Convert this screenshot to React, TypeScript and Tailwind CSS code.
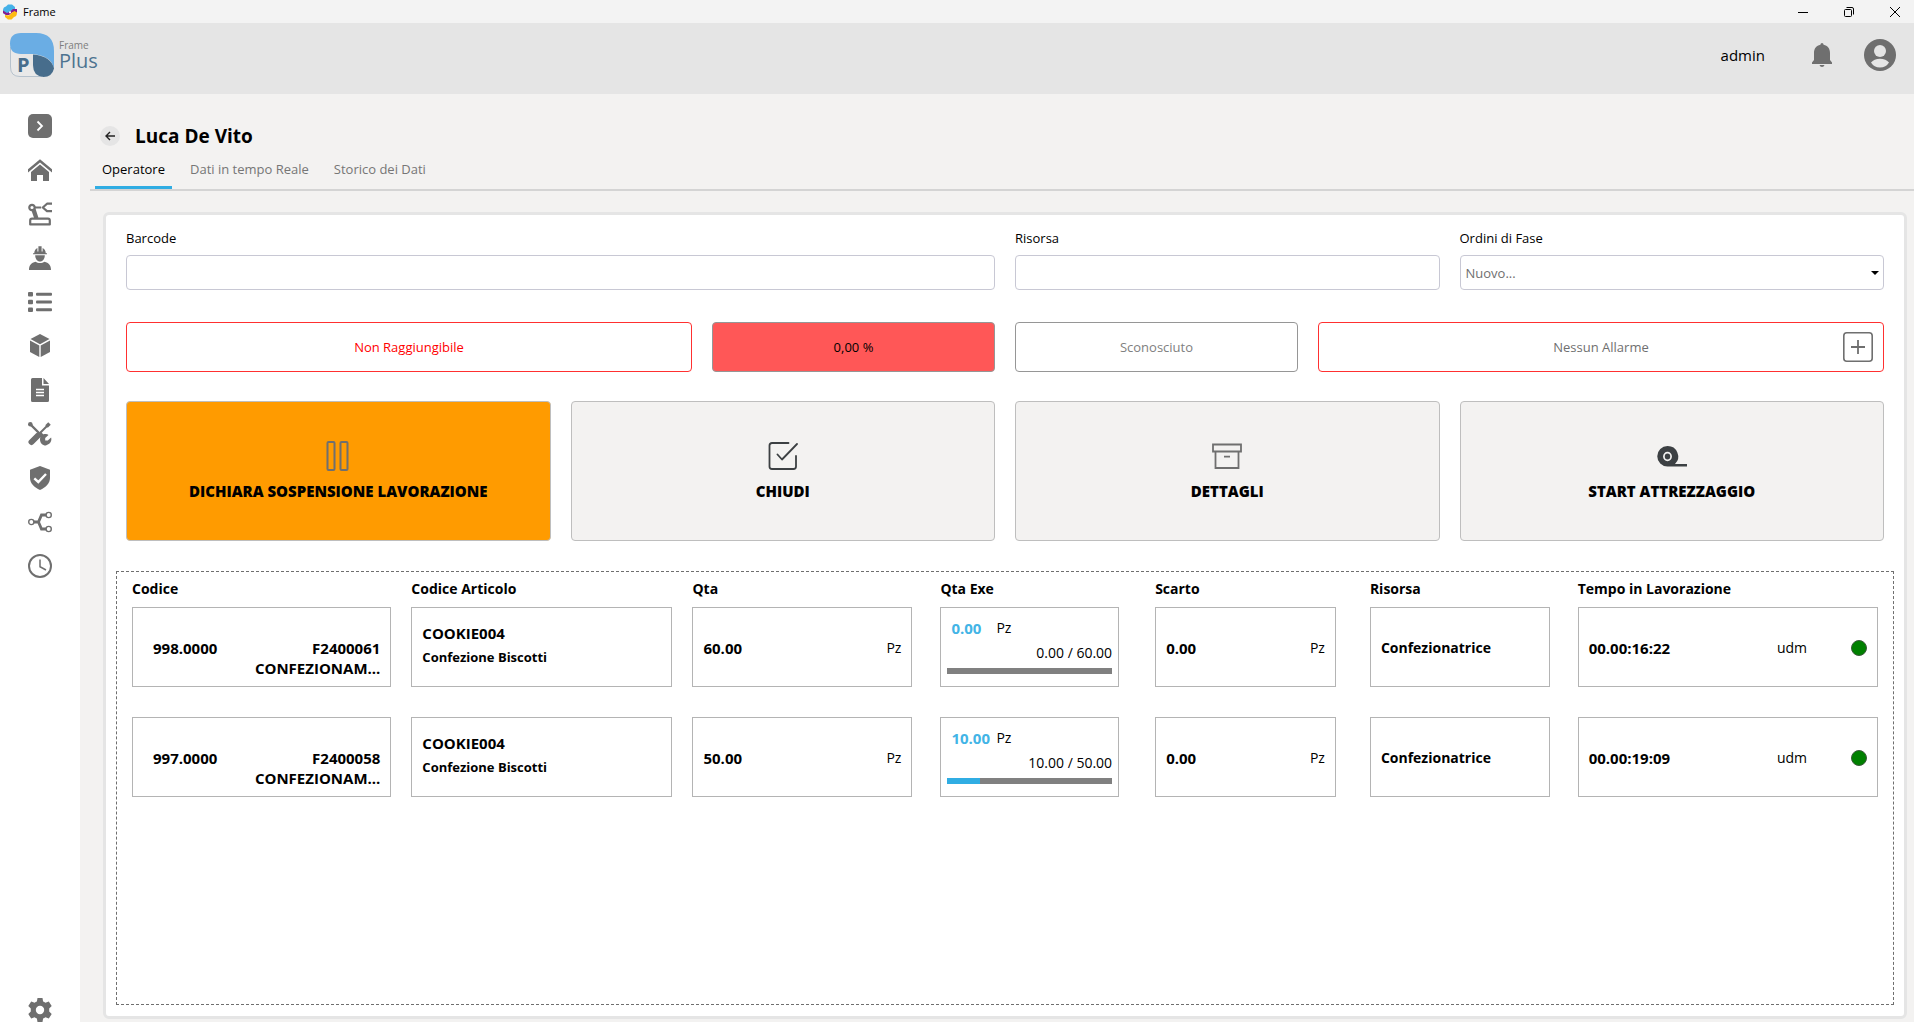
import React from "react";
import clsx from "clsx";

type Order = {
  id: string;
  order: string;
  phase: string;
  article: string;
  description: string;
  qty: number;
  done: number;
  scrap: number;
  resource: string;
  time: string;
};

const orders: Order[] = [
  {
    id: "998.0000",
    order: "F2400061",
    phase: "CONFEZIONAM...",
    article: "COOKIE004",
    description: "Confezione Biscotti",
    qty: 60,
    done: 0,
    scrap: 0,
    resource: "Confezionatrice",
    time: "00.00:16:22",
  },
  {
    id: "997.0000",
    order: "F2400058",
    phase: "CONFEZIONAM...",
    article: "COOKIE004",
    description: "Confezione Biscotti",
    qty: 50,
    done: 10,
    scrap: 0,
    resource: "Confezionatrice",
    time: "00.00:19:09",
  },
];

const columns = [
  { label: "Codice", width: "w-[16%]" },
  { label: "Codice Articolo", width: "w-[16.1%]" },
  { label: "Qta", width: "w-[14.2%]" },
  { label: "Qta Exe", width: "w-[12.3%]" },
  { label: "Scarto", width: "w-[12.3%]" },
  { label: "Risorsa", width: "w-[11.9%]" },
  { label: "Tempo in Lavorazione", width: "w-[17.2%]" },
];

const tabs = ["Operatore", "Dati in tempo Reale", "Storico dei Dati"];

const menu = [
  {
    label: "Espandi",
    icon: (
      <>
        <rect width="24" height="24" rx="5" fill="currentColor" />
        <path d="M9.500 7.500 14 12 9.500 16.500" fill="none" stroke="#fff" strokeWidth="1.800" />
      </>
    ),
  },
  {
    label: "Home",
    icon: (
      <>
        <path d="M0 11.2 12 1.2l12 10v3.3L12 4.6 0 14.5z" fill="currentColor" />
        <path d="M12 6.6 21 14v9h-6v-6H9v6H3v-9z" fill="currentColor" />
      </>
    ),
  },
  {
    label: "Macchine",
    icon: (
      <g fill="none" stroke="currentColor" strokeWidth="2.200" strokeLinejoin="round">
        <circle cx="4" cy="5.500" r="2.700" />
        <path d="M6.800 5.500h6.400M4.600 8.400 7.200 16M6.600 7.400 9.400 16M24 1.700h-5l-4.200 3.800L19 9.200h5" />
        <path d="M2.200 22.400v-4q0-1.800 1.800-1.800h16q1.800 0 1.800 1.800v4z" />
      </g>
    ),
  },
  {
    label: "Operatori",
    icon: (
      <g fill="currentColor">
        <path d="M5 8.2h14v-1h-1.2C17.600 4.500 16.200 2.700 14.600 2v3.500h-1V.3h-3.200v5.200h-1V2C7.800 2.700 6.400 4.500 6.200 7.200H5z" />
        <path d="M7.200 9.200h9.600c0 3.600-2 6.300-4.800 6.300s-4.800-2.700-4.800-6.300z" />
        <path d="M1 24c0-4.800 2.400-7.400 6.500-8.300 2.500 1.800 6.500 1.800 9 0C20.600 16.600 23 19.200 23 24z" />
      </g>
    ),
  },
  {
    label: "Elenco",
    icon: (
      <g fill="currentColor">
        <rect y="2" width="5" height="4.500" rx="1" />
        <rect y="9.750" width="5" height="4.500" rx="1" />
        <rect y="17.500" width="5" height="4.500" rx="1" />
        <rect x="8" y="2.700" width="16" height="3" rx="1" />
        <rect x="8" y="10.500" width="16" height="3" rx="1" />
        <rect x="8" y="18.200" width="16" height="3" rx="1" />
      </g>
    ),
  },
  {
    label: "Articoli",
    icon: (
      <g fill="currentColor">
        <path d="M12 0 21.500 5 12 10.200 2.500 5z" />
        <path d="M2 6.500 11.300 11.600V23L2 18z" />
        <path d="M22 6.500 12.700 11.600V23L22 18z" />
      </g>
    ),
  },
  {
    label: "Documenti",
    icon: (
      <>
        <path d="M4.500 0H14v7.500h7V22.500q0 1.500-1.500 1.500h-15Q3 24 3 22.500v-21Q3 0 4.500 0z" fill="currentColor" />
        <path d="M15.500 0 21 6h-5.500z" fill="currentColor" />
        <path d="M8 11.500h8M8 14.500h8M8 17.500h8" stroke="#fff" strokeWidth="1.300" />
      </>
    ),
  },
  {
    label: "Manutenzione",
    icon: (
      <g fill="none" stroke="currentColor">
        <path d="M2 2 13 13" strokeWidth="2.400" />
        <circle cx="2.300" cy="2.300" r="2.300" fill="currentColor" stroke="none" />
        <path d="M12.500 10.500 20 3" strokeWidth="2" />
        <path d="M18.500 4.500 21.500 1.500" strokeWidth="3.600" />
        <path d="M3.500 20 9.500 14" strokeWidth="6" strokeLinecap="round" />
        <path d="M11 11 15 15" strokeWidth="4" />
        <path
          d="M12 17.500c0-3.200 2.600-5.700 5.800-5.500 1 0 2 .4 2.700.9L17.200 16v2.600h2.600l3.300-3.200c1 3.200-.7 6-3.300 7.200l-2 .9c-3.400 0-5.800-2.600-5.800-6z"
          fill="currentColor"
          stroke="none"
        />
      </g>
    ),
  },
  {
    label: "Qualità",
    icon: (
      <>
        <path d="M12 0 22 3.800v8c0 5.600-4.300 9.800-10 12.200C6.300 21.600 2 17.400 2 11.800v-8z" fill="currentColor" />
        <path d="M6.300 12.300 10.300 16 18 8" fill="none" stroke="#fff" strokeWidth="2.400" />
      </>
    ),
  },
  {
    label: "Flussi",
    icon: (
      <g fill="none" stroke="currentColor">
        <circle cx="3.300" cy="12" r="2.600" strokeWidth="1.400" />
        <circle cx="20.700" cy="5" r="2.600" strokeWidth="1.400" />
        <circle cx="20.700" cy="19" r="2.600" strokeWidth="1.400" />
        <path d="M6 12h4.500M18 5h-4.500l-3 7 3 7H18" strokeWidth="2.800" />
      </g>
    ),
  },
  {
    label: "Orari",
    icon: (
      <g fill="none" stroke="currentColor">
        <circle cx="12" cy="12" r="11" strokeWidth="2" />
        <path d="M12 5.500v7.200l6 3.300" strokeWidth="1.500" />
      </g>
    ),
  },
];

const actions = [
  {
    label: "DICHIARA SOSPENSIONE LAVORAZIONE",
    highlight: true,
    icon: (
      <g fill="none" stroke="#6f6f6f" strokeWidth="2">
        <rect x="4.500" y="1" width="7" height="28" rx="1" />
        <rect x="17.500" y="1" width="7" height="28" rx="1" />
      </g>
    ),
  },
  {
    label: "CHIUDI",
    icon: (
      <g fill="none" stroke="#3c4043" strokeWidth="1.800" strokeLinecap="round" strokeLinejoin="round">
        <path d="M20.500 2H4Q1.500 2 1.500 4.500v21Q1.500 28 4 28h21.500q2.500 0 2.500-2.500V15" />
        <path d="M9.500 13.500 14 18.500 29 3" />
      </g>
    ),
  },
  {
    label: "DETTAGLI",
    icon: (
      <g fill="none" stroke="#6f6f6f" strokeWidth="1.800">
        <path d="M1 3.500h28v7H1zM3.500 10.500V27h23V10.500M12 15.700h6" />
      </g>
    ),
  },
  {
    label: "START ATTREZZAGGIO",
    icon: (
      <>
        <path d="M10.500 5a10.500 10.500 0 0 1 7.500 18h12v2.500H10.500A10.250 10.250 0 0 1 10.500 5z" fill="#3c4043" />
        <ellipse cx="10.500" cy="15.500" rx="3.600" ry="3.900" fill="none" stroke="#f3f2f1" strokeWidth="1.700" />
      </>
    ),
  },
];

function Cell({ className = "pt-0.5", children }: { className?: string; children: React.ReactNode }) {
  return (
    <div className={clsx("flex h-20 items-center justify-between border border-[#b4b4b4] px-[10px]", className)}>
      {children}
    </div>
  );
}

function OrderRow({ order }: { order: Order }) {
  return (
    <tr className="align-top">
      <td className="pr-5 pb-[30px]">
        <Cell className="pt-[30px] pl-5 text-[15px] font-bold">
          <span className="self-start">{order.id}</span>
          <span className="self-start text-right">
            {order.order}
            <br />
            {order.phase}
          </span>
        </Cell>
      </td>
      <td className="pr-5">
        <Cell className="pb-[5px] font-bold">
          <div>
            <p className="text-[15px] leading-6">{order.article}</p>
            <p className="text-[13px] leading-6">{order.description}</p>
          </div>
        </Cell>
      </td>
      <td className="pr-7">
        <Cell>
          <b className="text-[15px]">{order.qty.toFixed(2)}</b>
          <span>Pz</span>
        </Cell>
      </td>
      <td className="pr-9">
        <div className="h-20 border border-[#b4b4b4] px-[6px] pt-[10px]">
          <div className="flex pl-1">
            <b className="w-[45px] text-[15px] text-[#42b4e6]">{order.done.toFixed(2)}</b>
            <span>Pz</span>
          </div>
          <p className="mt-[5px] text-right">
            {order.done.toFixed(2)} / {order.qty.toFixed(2)}
          </p>
          <div className="mt-[5px] h-[6px] bg-[#808080]">
            <div className="h-full bg-[#30ade3]" style={{ width: `${(order.done / order.qty) * 100}%` }} />
          </div>
        </div>
      </td>
      <td className="pr-[34px]">
        <Cell>
          <b className="text-[15px]">{order.scrap.toFixed(2)}</b>
          <span>Pz</span>
        </Cell>
      </td>
      <td className="pr-7">
        <Cell>
          <b>{order.resource}</b>
        </Cell>
      </td>
      <td>
        <Cell>
          <b className="flex-1 text-[15px]">{order.time}</b>
          <span>udm</span>
          <span className="ml-11 size-4 rounded-full border border-[#3c5a3c] bg-[#008000]" />
        </Cell>
      </td>
    </tr>
  );
}

function TitleBar() {
  return (
    <div className="flex h-[23px] items-center bg-[#f3f3f3] pr-[14px] pl-[2px]">
      <svg viewBox="0 0 16 16" className="size-4">
        <path d="M1 6.500Q1 3 4 2.500L6 .5h4l3 2.500v2.500L8 8 4 11 1 9z" fill="#45b1e8" />
        <path d="M1 6.500 5 9 8 7.500 11 5h4v4l-4-1-4 3H4L1 9z" fill="#8a1a8c" />
        <path d="M15 8.500q0 4-3 4.500L9.500 15.500H6L3 13v-2l4 .5L10 8.500 12.500 7z" fill="#fdbb12" />
        <circle cx="8" cy="8.300" r="1.100" fill="#fff" />
      </svg>
      <span className="ml-[5px] flex-1 text-[11px]">Frame</span>
      <div className="flex gap-9">
        <button aria-label="Riduci a icona">
          <svg viewBox="0 0 10 10" className="size-[10px]">
            <path d="M0 5.500h10" stroke="#000" />
          </svg>
        </button>
        <button aria-label="Ripristina">
          <svg viewBox="0 0 10 10" className="size-[10px]" fill="none" stroke="#000">
            <rect x=".5" y="2.500" width="7" height="7" rx="1" />
            <path d="M2.500.5H8Q9.500.5 9.500 2v5.500" />
          </svg>
        </button>
        <button aria-label="Chiudi finestra">
          <svg viewBox="0 0 10 10" className="size-[10px]">
            <path d="M0 0 10 10M10 0 0 10" stroke="#000" />
          </svg>
        </button>
      </div>
    </div>
  );
}

function Header() {
  return (
    <header className="flex h-[71px] items-center bg-[#e5e5e5] pr-[18px] pb-[7px] pl-[10px] text-[#6f6f6f]">
      <div className="flex flex-1 items-center gap-[5px]">
        <svg viewBox="0 0 44 44" className="size-11">
          <path d="M.5 14v20q0 9.500 9.500 9.500h22" fill="#e9e9e9" stroke="#b6c2cd" />
          <path d="M11 0h15q18 0 18 18v18q-2-13-21-15H11Q0 21 0 10.500T11 0z" fill="#6aade4" />
          <path d="M23 21.500q18 1.500 21 14Q42 44 33.500 44 23 43 23 32z" fill="#476d8c" />
          <text x="7" y="39" fontFamily="Open Sans, sans-serif" fontSize="20" fontWeight="700" fill="#476d8c">
            P
          </text>
        </svg>
        <div>
          <p className="text-[10px] leading-3 text-[#7d7d7d]">Frame</p>
          <p className="text-xl leading-5 text-[#4d7390]">Plus</p>
        </div>
      </div>
      <span className="pt-0.5 text-[15px] text-black">admin</span>
      <button aria-label="Notifiche" className="ml-[47px]">
        <svg viewBox="0 0 20 24" className="h-6 w-5" fill="currentColor">
          <path d="M10 0q1.400 0 1.600 1.800C15.600 2.600 18 5.500 18 10v7l2 2.500V21H0v-1.500L2 17v-7c0-4.500 2.400-7.400 6.400-8.200Q8.600 0 10 0zM7.500 22h5q-.6 2-2.500 2t-2.500-2z" />
        </svg>
      </button>
      <button aria-label="Profilo" className="ml-8">
        <svg viewBox="0 0 32 32" className="size-8">
          <circle cx="16" cy="16" r="16" fill="currentColor" />
          <circle cx="16" cy="12" r="6" fill="#e5e5e5" />
          <path d="M7 23.500q3-3.800 9-3.800t9 3.800q-3 5-9 5t-9-5z" fill="#e5e5e5" />
        </svg>
      </button>
    </header>
  );
}

export default function App() {
  return (
    <div className="flex min-h-screen flex-col bg-[#f3f2f1] font-['Open_Sans',sans-serif] text-sm text-black">
      <TitleBar />
      <Header />
      <div className="flex flex-1">
        <nav className="flex w-20 flex-col items-center gap-5 bg-white pt-5 text-[#6f6f6f]">
          {menu.map((item) => (
            <button key={item.label} aria-label={item.label}>
              <svg viewBox="0 0 24 24" className="size-6">
                {item.icon}
              </svg>
            </button>
          ))}
          <button aria-label="Impostazioni" className="mt-auto">
            <svg viewBox="0 0 24 24" className="size-6" fill="currentColor" fillRule="evenodd">
              <path d="M9.500 0h5l.6 3.500q1.200.4 2.300 1.200L20.800 3.400 23.700 8l-2.500 2.400v3.200l2.500 2.400-2.900 4.600-3.400-1.300q-1.100.8-2.300 1.200L14.500 24h-5l-.6-3.500q-1.200-.4-2.300-1.200L3.200 20.600.3 16l2.500-2.400v-3.200L.3 8l2.900-4.600 3.400 1.300q1.100-.8 2.300-1.200zM12 7.800a4.200 4.200 0 1 0 0 8.400 4.200 4.200 0 0 0 0-8.400z" />
            </svg>
          </button>
        </nav>

        <main className="flex flex-1 flex-col pt-8">
          <div className="flex h-5 items-center gap-[15px] pl-5">
            <button aria-label="Indietro" className="flex size-5 items-center justify-center rounded-full bg-[#e5e5e5]">
              <svg viewBox="0 0 10 10" className="size-[10px]" fill="none" stroke="#222" strokeWidth="1.400">
                <path d="M10 5H1M5 1 1 5l4 4" />
              </svg>
            </button>
            <h1 className="pt-0.5 text-[19px] font-bold">Luca De Vito</h1>
          </div>

          <div className="ml-[10px] flex h-[45px] items-end gap-[11px] border-b-2 border-[#d4d4d4] pl-[5px]">
            {tabs.map((tab, i) => (
              <button
                key={tab}
                className={clsx(
                  "border-b-3 px-[7px] pb-[7px] text-[13px] leading-5",
                  i === 0 ? "border-[#30ade3]" : "border-transparent text-[#767676]"
                )}
              >
                {tab}
              </button>
            ))}
          </div>

          <section className="mt-[21px] mr-[7px] mb-[3px] ml-[23px] flex flex-1 flex-col rounded-md border-3 border-[#e5e5e5] bg-white px-[10px] pt-[13px] pb-[11px]">
            {/* FIELDS */}
            <div className="grid grid-cols-4 gap-5 px-[10px] text-[13px] leading-5">
              <div className="col-span-2 flex flex-col gap-[7px]">
                <label htmlFor="barcode">Barcode</label>
                <input id="barcode" className="h-[35px] rounded border border-[#c8c8d4] px-1" />
              </div>
              <div className="flex flex-col gap-[7px]">
                <label htmlFor="risorsa">Risorsa</label>
                <input id="risorsa" className="h-[35px] rounded border border-[#c8c8d4] px-1" />
              </div>
              <div className="flex flex-col gap-[7px]">
                <label htmlFor="ordini">Ordini di Fase</label>
                <div className="relative">
                  <select
                    id="ordini"
                    className="h-[35px] w-full appearance-none rounded border border-[#c8c8d4] px-[5px] text-[#6f6f6f]"
                  >
                    <option>Nuovo...</option>
                  </select>
                  <svg viewBox="0 0 8 4" className="pointer-events-none absolute top-4 right-[5px] h-1 w-2">
                    <path d="M0 0h8L4 4z" />
                  </svg>
                </div>
              </div>
            </div>

            {/* MACHINE STATUS */}
            <div className="mt-8 grid grid-cols-[2fr_1fr_1fr_2fr] gap-5 px-[10px] text-[13px]">
              <div className="flex h-[50px] items-center justify-center rounded border border-[#ff3030] text-[#ff0000]">
                Non Raggiungibile
              </div>
              <div className="flex h-[50px] items-center justify-center rounded border border-[#969696] bg-[#ff5757]">
                0,00 %
              </div>
              <div className="flex h-[50px] items-center justify-center rounded border border-[#969696] text-[#808080]">
                Sconosciuto
              </div>
              <div className="relative flex h-[50px] items-center justify-center rounded border border-[#ff3030] text-[#6f6f6f]">
                Nessun Allarme
                <button aria-label="Aggiungi allarme" className="absolute top-[9px] right-[10px]">
                  <svg viewBox="0 0 30 30" className="size-[30px]" fill="none" stroke="#6f6f6f">
                    <rect x=".8" y=".8" width="28.400" height="28.400" rx="3" strokeWidth="1.600" />
                    <path d="M15 8v14M8 15h14" strokeWidth="1.800" />
                  </svg>
                </button>
              </div>
            </div>

            {/* ACTIONS */}
            <div className="mt-[29px] grid grid-cols-4 gap-5 px-[10px]">
              {actions.map((action) => (
                <button
                  key={action.label}
                  className={clsx(
                    "flex h-[140px] flex-col items-center rounded border border-[#bebebe] pt-[39px] text-[15px] leading-5 font-extrabold",
                    action.highlight ? "bg-[#ff9b00]" : "bg-[#f3f2f1]"
                  )}
                >
                  <svg viewBox="0 0 30 30" className="mb-[10px] size-[30px]">
                    {action.icon}
                  </svg>
                  {action.label}
                </button>
              ))}
            </div>

            {/* ORDERS */}
            <div className="mt-[30px] flex-1 border border-dashed border-[#6f6f6f] px-[15px] pt-[7px]">
              <table className="w-full table-fixed text-sm leading-5">
                <thead>
                  <tr>
                    {columns.map((column) => (
                      <th key={column.label} className={clsx("pb-2 text-left font-bold", column.width)}>
                        {column.label}
                      </th>
                    ))}
                  </tr>
                </thead>
                <tbody>
                  {orders.map((order) => (
                    <OrderRow key={order.id} order={order} />
                  ))}
                </tbody>
              </table>
            </div>
          </section>
        </main>
      </div>
    </div>
  );
}
